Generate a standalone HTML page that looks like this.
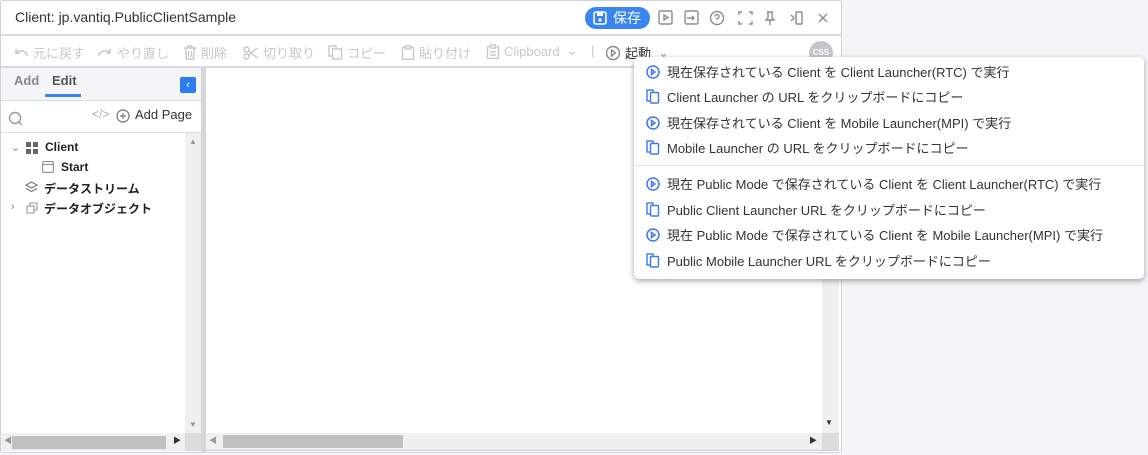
<!DOCTYPE html>
<html><head><meta charset="utf-8"><style>
*{box-sizing:border-box;margin:0;padding:0}
body{width:1148px;height:455px;background:#f4f5f7;font-family:"Liberation Sans","Noto Sans CJK JP",sans-serif;position:relative;overflow:hidden;color:#333}
.win{position:absolute;left:0;top:0;width:842px;height:453px;background:#fff;border:1px solid #cfd2d6;border-radius:3px}
.abs{position:absolute}
.title{left:14px;top:8px;font-size:14px;color:#333}
.tb{font-size:13px;color:#c5c7ca;top:42px;white-space:nowrap;display:flex;align-items:center}
.tb svg{margin-right:4px}
.menu{position:absolute;left:634px;top:57px;width:510px;height:222px;background:#fff;border-radius:5px;box-shadow:0 2px 6px rgba(0,0,0,.35);font-size:13px;color:#333}
.mi{position:absolute;left:12px;white-space:nowrap;display:flex;align-items:center}
.mi svg{margin-right:7px}
.sb{background:#f0f0f0}
.th{background:#c1c1c1}
</style></head><body>
<div class="win">
 <div class="abs title">Client: jp.vantiq.PublicClientSample</div>
 <div class="abs" style="left:584px;top:6px;width:65px;height:22px;border-radius:11px;background:#3a86f0;color:#fff;font-size:14px;line-height:22px;padding-left:28px">保存
  <svg class="abs" style="left:8px;top:4px" width="14" height="14" viewBox="0 0 14 14"><rect x="1" y="1" width="12" height="12" rx="2" fill="none" stroke="#fff" stroke-width="1.6"/><rect x="4" y="1" width="6" height="4" fill="#fff"/><circle cx="7" cy="9" r="1.6" fill="#fff"/></svg></div>
 <svg class="abs" style="left:656px;top:8px" width="180" height="18" viewBox="0 0 180 18" fill="none" stroke="#8a8d91" stroke-width="1.4">
  <rect x="2" y="2" width="13" height="13" rx="1.5"/><path d="M7 6l4 2.5-4 2.5z"/>
  <rect x="28" y="2" width="13" height="13" rx="1.5"/><path d="M30 9h7m-2-2l2 2-2 2"/>
  <circle cx="60" cy="9" r="6.5"/><path d="M58 7.5a2 2 0 1 1 2 2v1.3M60 12.5v.5"/>
  <path d="M82 6V3h3M92 3h3v3M95 12v3h-3M85 15h-3v-3"/>
  <path d="M110 3h6M111 3v6l-2 2h8l-2-2V3M113 11v5"/>
  <path d="M134 6l3 3-3 3"/><rect x="139" y="3" width="6" height="12" rx="1"/>
  <path d="M162 5l8 8M170 5l-8 8"/>
 </svg>
 <div class="abs" style="left:0;top:33px;width:840px;height:2px;background:#d9dbde"></div>
 <div class="abs tb" style="left:12px"><svg width="16" height="14" fill="none" stroke="#c5c7ca" stroke-width="1.5"><path d="M3 3v4h4M3 7a6 5 0 0 1 11 3"/></svg>元に戻す</div>
 <div class="abs tb" style="left:96px"><svg width="16" height="14" fill="none" stroke="#c5c7ca" stroke-width="1.5"><path d="M13 3v4H9M13 7A6 5 0 0 0 2 10"/></svg>やり直し</div>
 <div class="abs tb" style="left:182px"><svg width="14" height="15" fill="none" stroke="#c5c7ca" stroke-width="1.4"><path d="M1 3h12M5 3V1h4v2M2.5 3l1 11h7l1-11M5.5 6v6M8.5 6v6"/></svg>削除</div>
 <div class="abs tb" style="left:242px"><svg width="16" height="14" fill="none" stroke="#c5c7ca" stroke-width="1.4"><circle cx="3.5" cy="3.5" r="2.5"/><circle cx="3.5" cy="10.5" r="2.5"/><path d="M5.5 5l9 7M5.5 9l9-7"/></svg>切り取り</div>
 <div class="abs tb" style="left:327px"><svg width="15" height="15" fill="none" stroke="#c5c7ca" stroke-width="1.4"><rect x="1" y="1" width="7" height="10"/><rect x="4.5" y="4" width="9" height="10" fill="#fff"/></svg>コピー</div>
 <div class="abs tb" style="left:400px"><svg width="14" height="15" fill="none" stroke="#c5c7ca" stroke-width="1.4"><rect x="1.5" y="2.5" width="11" height="12" rx="1"/><rect x="4.5" y="1" width="5" height="3" fill="#fff"/></svg>貼り付け</div>
 <div class="abs tb" style="left:485px"><svg width="14" height="15" fill="none" stroke="#c5c7ca" stroke-width="1.4"><rect x="1.5" y="2.5" width="11" height="12" rx="1"/><rect x="4.5" y="1" width="5" height="3" fill="#fff"/><path d="M4 8h6M4 11h6"/></svg>Clipboard&nbsp;&nbsp;<span>⌄</span></div>
 <div class="abs tb" style="left:590px">|</div>
 <div class="abs tb" style="left:604px;color:#333"><svg width="16" height="16" viewBox="0 0 16 16" fill="none" stroke="#888" stroke-width="1.4"><circle cx="8" cy="8" r="6.5"/><path d="M6.5 5l4 3-4 3z"/></svg>起動&nbsp;&nbsp;<span style="color:#999">⌄</span></div>
 <div class="abs" style="left:808px;top:40px;width:24px;height:24px;border-radius:12px;background:#c4c6c9;color:#fff;font-size:8px;font-weight:bold;text-align:center;line-height:24px">CSS</div>
 <div class="abs" style="left:0;top:65px;width:840px;height:2px;background:#d9dbde"></div>
 <div class="abs" style="left:0;top:67px;width:200px;height:33px;background:#f4f5f6;border-bottom:1px solid #d9dbde"></div>
 <div class="abs" style="left:13px;top:72px;font-size:13px;font-weight:bold;color:#888">Add</div>
 <div class="abs" style="left:51px;top:72px;font-size:13px;font-weight:bold;color:#555">Edit</div>
 <div class="abs" style="left:44px;top:93px;width:36px;height:3px;background:#3a86f0"></div>
 <div class="abs" style="left:179px;top:76px;width:16px;height:16px;background:#2a7ff0;border-radius:2px;color:#fff;font-size:11px;text-align:center;line-height:16px">‹</div>
 <div class="abs" style="left:0;top:131px;width:200px;height:1px;background:#d9dbde"></div>
 <svg class="abs" style="left:7px;top:110px" width="16" height="16" fill="none" stroke="#999" stroke-width="1.4"><circle cx="7" cy="7" r="5.5"/><path d="M11 11l3 3"/></svg>
 <div class="abs" style="left:91px;top:106px;font-size:12px;color:#aaa">&lt;/&gt;</div>
 <svg class="abs" style="left:115px;top:108px" width="14" height="14" fill="none" stroke="#888" stroke-width="1.4"><circle cx="7" cy="7" r="6"/><path d="M7 4v6M4 7h6"/></svg>
 <div class="abs" style="left:134px;top:106px;font-size:13px;color:#333">Add Page</div>
 <div class="abs" style="left:10px;top:140px;font-size:11px;color:#888">⌄</div>
 <svg class="abs" style="left:25px;top:141px" width="12" height="12"><rect x="0" y="0" width="5" height="5" fill="#666"/><rect x="7" y="0" width="5" height="5" fill="#666"/><rect x="0" y="7" width="5" height="5" fill="#666"/><rect x="7" y="7" width="5" height="5" fill="#666"/></svg>
 <div class="abs" style="left:44px;top:139px;font-size:12px;font-weight:bold;color:#222">Client</div>
 <svg class="abs" style="left:41px;top:160px" width="12" height="12" fill="none" stroke="#999" stroke-width="1.2"><rect x=".6" y=".6" width="10.8" height="10.8" rx="1"/><path d="M1 3.5h10"/></svg>
 <div class="abs" style="left:60px;top:159px;font-size:12px;font-weight:bold;color:#222">Start</div>
 <svg class="abs" style="left:24px;top:180px" width="13" height="13" fill="none" stroke="#777" stroke-width="1.2"><path d="M6.5 1l5.5 3-5.5 3-5.5-3z"/><path d="M1 7.5l5.5 3 5.5-3"/></svg>
 <div class="abs" style="left:43px;top:179px;font-size:12px;font-weight:bold;color:#222">データストリーム</div>
 <div class="abs" style="left:10px;top:200px;font-size:11px;color:#888">›</div>
 <svg class="abs" style="left:25px;top:201px" width="12" height="12" fill="none" stroke="#999" stroke-width="1.1"><rect x="1" y="4" width="7" height="7"/><path d="M4 4V1h7v7H8"/></svg>
 <div class="abs" style="left:43px;top:199px;font-size:12px;font-weight:bold;color:#222">データオブジェクト</div>
 <div class="abs sb" style="left:184px;top:132px;width:16px;height:300px"></div>
 <div class="abs" style="left:188px;top:136px;font-size:8px;color:#999">▲</div>
 <div class="abs" style="left:188px;top:419px;font-size:8px;color:#999">▼</div>
 <div class="abs sb" style="left:0;top:432px;width:184px;height:18px"></div>
 <div class="abs" style="left:3px;top:434px;font-size:8px;color:#999">◀</div>
 <div class="abs th" style="left:11px;top:435px;width:154px;height:13px"></div>
 <div class="abs" style="left:172px;top:434px;font-size:8px;color:#333">▶</div>
 <div class="abs" style="left:184px;top:432px;width:16px;height:18px;background:#dcdcdc"></div>
 <div class="abs" style="left:200px;top:67px;width:5px;height:384px;background:#d5d7da"></div>
 <div class="abs sb" style="left:821px;top:67px;width:17px;height:365px"></div>
 <div class="abs" style="left:824px;top:417px;font-size:8px;color:#333">▼</div>
 <div class="abs sb" style="left:205px;top:432px;width:616px;height:17px"></div>
 <div class="abs" style="left:208px;top:434px;font-size:8px;color:#999">◀</div>
 <div class="abs th" style="left:222px;top:434px;width:180px;height:13px"></div>
 <div class="abs" style="left:808px;top:434px;font-size:8px;color:#333">▶</div>
 <div class="abs" style="left:821px;top:432px;width:17px;height:17px;background:#dcdcdc"></div>
 <div class="abs" style="left:205px;top:449px;width:633px;height:1px;background:#ccc"></div>
</div>
<div class="menu">
 <div class="mi" style="top:5px"><svg width="14" height="14" fill="none" stroke="#3a7af0" stroke-width="1.5"><circle cx="7" cy="7" r="6"/><path d="M5.5 4.5l3.5 2.5-3.5 2.5z"/></svg>現在保存されている Client を Client Launcher(RTC) で実行</div>
 <div class="mi" style="top:30px"><svg width="14" height="15" fill="none" stroke="#3a7af0" stroke-width="1.4"><rect x="1" y="1" width="6" height="11"/><rect x="4.5" y="3.5" width="8" height="10.5" rx="1" fill="#fff"/></svg>Client Launcher の URL をクリップボードにコピー</div>
 <div class="mi" style="top:56px"><svg width="14" height="14" fill="none" stroke="#3a7af0" stroke-width="1.5"><circle cx="7" cy="7" r="6"/><path d="M5.5 4.5l3.5 2.5-3.5 2.5z"/></svg>現在保存されている Client を Mobile Launcher(MPI) で実行</div>
 <div class="mi" style="top:81px"><svg width="14" height="15" fill="none" stroke="#3a7af0" stroke-width="1.4"><rect x="1" y="1" width="6" height="11"/><rect x="4.5" y="3.5" width="8" height="10.5" rx="1" fill="#fff"/></svg>Mobile Launcher の URL をクリップボードにコピー</div>
 <div class="abs" style="left:0;top:108px;width:510px;height:1px;background:#e2e3e5"></div>
 <div class="mi" style="top:117px"><svg width="14" height="14" fill="none" stroke="#3a7af0" stroke-width="1.5"><circle cx="7" cy="7" r="6"/><path d="M5.5 4.5l3.5 2.5-3.5 2.5z"/></svg>現在 Public Mode で保存されている Client を Client Launcher(RTC) で実行</div>
 <div class="mi" style="top:143px"><svg width="14" height="15" fill="none" stroke="#3a7af0" stroke-width="1.4"><rect x="1" y="1" width="6" height="11"/><rect x="4.5" y="3.5" width="8" height="10.5" rx="1" fill="#fff"/></svg>Public Client Launcher URL をクリップボードにコピー</div>
 <div class="mi" style="top:168px"><svg width="14" height="14" fill="none" stroke="#3a7af0" stroke-width="1.5"><circle cx="7" cy="7" r="6"/><path d="M5.5 4.5l3.5 2.5-3.5 2.5z"/></svg>現在 Public Mode で保存されている Client を Mobile Launcher(MPI) で実行</div>
 <div class="mi" style="top:194px"><svg width="14" height="15" fill="none" stroke="#3a7af0" stroke-width="1.4"><rect x="1" y="1" width="6" height="11"/><rect x="4.5" y="3.5" width="8" height="10.5" rx="1" fill="#fff"/></svg>Public Mobile Launcher URL をクリップボードにコピー</div>
</div>
</body></html>
